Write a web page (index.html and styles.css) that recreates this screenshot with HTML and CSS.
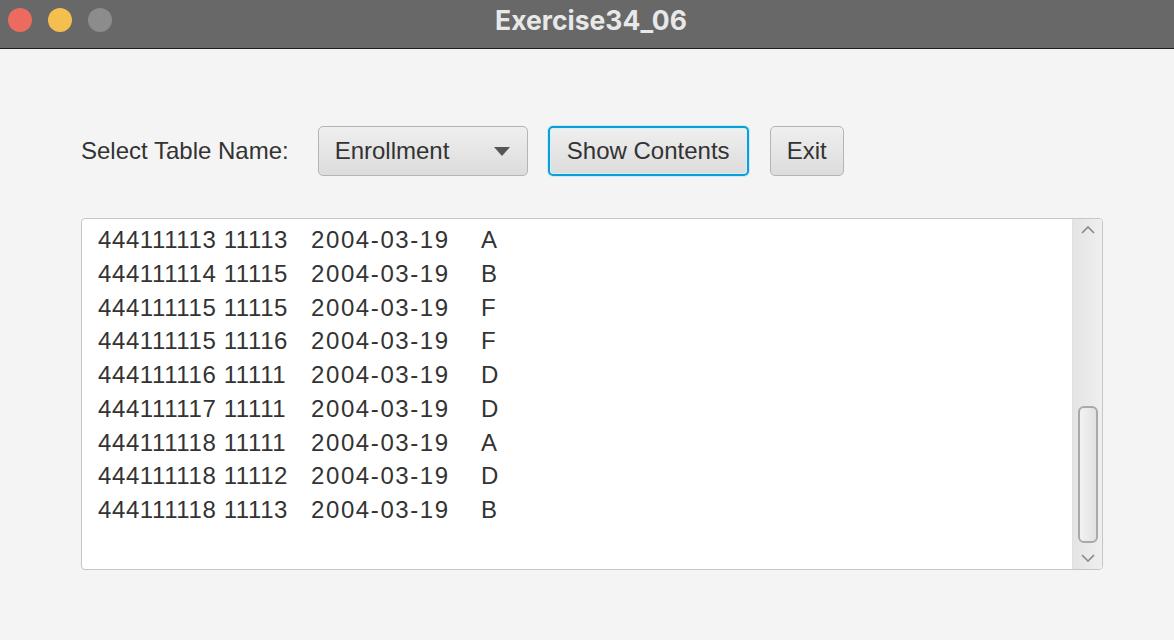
FILE: index.html
```html
<!DOCTYPE html>
<html>
<head>
<meta charset="utf-8">
<link rel="stylesheet" href="styles.css">
</head>
<body>
<div class="window">
  <header class="titlebar">
    <div class="lights">
      <span class="light red"></span>
      <span class="light yellow"></span>
      <span class="light gray"></span>
    </div>
    <div class="title">Exercise34_06</div>
  </header>
  <main class="content">
    <div class="toolbar">
      <span class="label">Select Table Name:</span>
      <div class="combo">
        <span class="combo-text">Enrollment</span>
        <span class="combo-arrow"></span>
      </div>
      <button class="btn focused">Show Contents</button>
      <button class="btn">Exit</button>
    </div>
    <div class="textarea">
      <div class="text">
        <div class="row"><span class="c1">444111113 11113</span><span class="c2">2004-03-19</span><span>A</span></div>
        <div class="row"><span class="c1">444111114 11115</span><span class="c2">2004-03-19</span><span>B</span></div>
        <div class="row"><span class="c1">444111115 11115</span><span class="c2">2004-03-19</span><span>F</span></div>
        <div class="row"><span class="c1">444111115 11116</span><span class="c2">2004-03-19</span><span>F</span></div>
        <div class="row"><span class="c1">444111116 11111</span><span class="c2">2004-03-19</span><span>D</span></div>
        <div class="row"><span class="c1">444111117 11111</span><span class="c2">2004-03-19</span><span>D</span></div>
        <div class="row"><span class="c1">444111118 11111</span><span class="c2">2004-03-19</span><span>A</span></div>
        <div class="row"><span class="c1">444111118 11112</span><span class="c2">2004-03-19</span><span>D</span></div>
        <div class="row"><span class="c1">444111118 11113</span><span class="c2">2004-03-19</span><span>B</span></div>
      </div>
      <div class="scrollbar">
        <svg class="sb-arrow" width="16" height="10" viewBox="0 0 16 10"><path d="M2 8 L8 2 L14 8" fill="none" stroke="#8a8a8a" stroke-width="1.6"/></svg>
        <div class="track"><div class="thumb"></div></div>
        <svg class="sb-arrow" width="16" height="10" viewBox="0 0 16 10"><path d="M2 2 L8 8 L14 2" fill="none" stroke="#8a8a8a" stroke-width="1.6"/></svg>
      </div>
    </div>
  </main>
</div>
</body>
</html>
```
FILE: styles.css
```css
html, body {
  margin: 0;
  padding: 0;
}
body {
  width: 1174px;
  height: 640px;
  background: #f4f4f4;
  font-family: "Liberation Sans", Arial, sans-serif;
  overflow: hidden;
}
.window {
  display: flex;
  flex-direction: column;
  height: 640px;
}
.titlebar {
  position: relative;
  height: 48px;
  background: #686868;
  border-bottom: 1px solid #1e1e1e;
  display: flex;
  align-items: center;
  justify-content: center;
  flex-shrink: 0;
}
.lights {
  position: absolute;
  left: 8px;
  top: 8px;
  display: flex;
  gap: 16px;
}
.light {
  width: 24px;
  height: 24px;
  border-radius: 50%;
}
.red { background: #ed6a5e; }
.yellow { background: #f5bf4f; }
.gray { background: #8c8c8c; }
.title {
  color: #e8e8e8;
  font-weight: 700;
  font-size: 26.5px;
  margin-top: -8px;
  margin-left: 8px;
  font-family: Inter, "Liberation Sans", sans-serif;
}
.content {
  padding: 77px 71px 0 81px;
  display: flex;
  flex-direction: column;
}
.toolbar {
  display: flex;
  align-items: center;
  height: 50px;
}
.label {
  font-size: 24px;
  color: #333;
  margin-right: 29px;
  white-space: nowrap;
}
.combo {
  box-sizing: border-box;
  width: 210px;
  height: 50px;
  border: 1px solid #b4b4b4;
  border-radius: 5px;
  background: linear-gradient(#efefef, #dcdcdc);
  display: flex;
  align-items: center;
  padding: 0 17px 0 16px;
  justify-content: space-between;
  margin-right: 20px;
}
.combo-text {
  font-size: 24px;
  color: #333;
}
.combo-arrow {
  width: 0;
  height: 0;
  border-left: 8px solid transparent;
  border-right: 8px solid transparent;
  border-top: 9px solid #555;
}
.btn {
  box-sizing: border-box;
  height: 50px;
  border: 1px solid #b4b4b4;
  border-radius: 5px;
  background: linear-gradient(#efefef, #dcdcdc);
  font-family: inherit;
  font-size: 24px;
  color: #333;
  padding: 0 16px;
  margin-right: 21px;
  white-space: nowrap;
}
.btn.focused {
  width: 201px;
  padding: 0;
  border: 2px solid #0a9fd8;
  box-shadow: 0 0 0 1px #cfe9f4, inset 0 0 0 1px #d8eef7;
}
.textarea {
  box-sizing: border-box;
  margin-top: 42px;
  width: 1022px;
  height: 352px;
  background: #fff;
  border: 1px solid #c6c6c6;
  border-radius: 4px;
  display: flex;
  overflow: hidden;
}
.text {
  flex: 1;
  padding: 4px 0 0 16px;
  font-size: 24px;
  letter-spacing: 0.6px;
  line-height: 33.75px;
  color: #333;
  white-space: nowrap;
}
.row {
  display: flex;
}
.c1 {
  width: 213px;
}
.c2 {
  width: 170px;
  letter-spacing: 1.6px;
}
.scrollbar {
  width: 29px;
  background: linear-gradient(90deg, #e4e4e4, #efefef);
  border-left: 1px solid #e0e0e0;
  display: flex;
  flex-direction: column;
  align-items: center;
}
.sb-arrow {
  flex-shrink: 0;
  margin: 6px 0;
}
.track {
  flex: 1;
  width: 100%;
  display: flex;
  flex-direction: column;
  justify-content: flex-end;
  align-items: center;
  padding-bottom: 4px;
  box-sizing: border-box;
}
.thumb {
  box-sizing: border-box;
  width: 20px;
  height: 137px;
  border: 2px solid #a9a9a9;
  border-radius: 6px;
  background: linear-gradient(90deg, #f2f2f2, #e2e2e2);
}
```
